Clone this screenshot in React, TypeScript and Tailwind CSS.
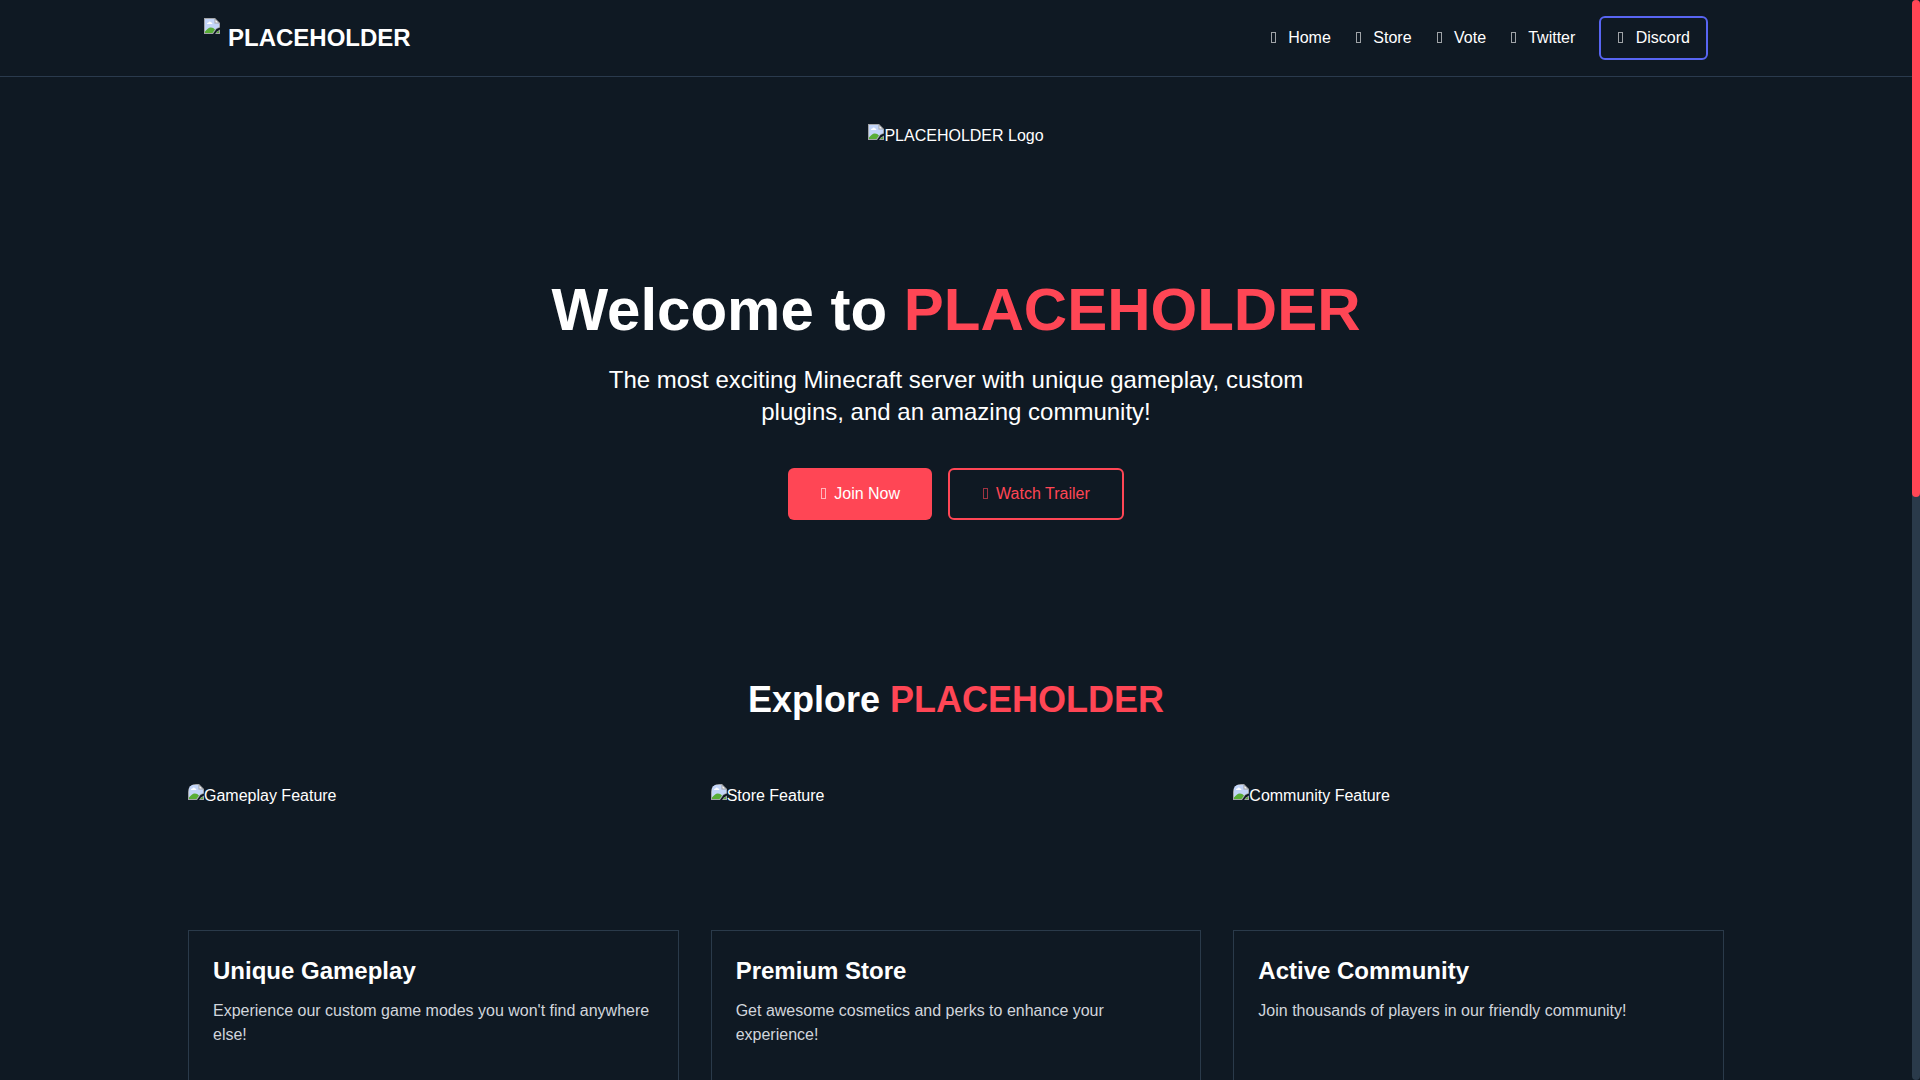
interface Feature {
  alt: string
  title: string
  text: string
}

const LINKS = ['Home', 'Store', 'Vote', 'Twitter']

const FEATURES: Feature[] = [
  {
    alt: 'Gameplay Feature',
    title: 'Unique Gameplay',
    text: "Experience our custom game modes you won't find anywhere else!",
  },
  {
    alt: 'Store Feature',
    title: 'Premium Store',
    text: 'Get awesome cosmetics and perks to enhance your experience!',
  },
  {
    alt: 'Community Feature',
    title: 'Active Community',
    text: 'Join thousands of players in our friendly community!',
  },
]

export default function App() {
  return (
    <div className="flex h-screen overflow-hidden bg-[#0f1923] font-['Liberation_Sans',Arial,sans-serif] text-base text-white">
      <div className="min-w-0 flex-1">
        <Header />
        <main>
          <Hero />
          <Features />
        </main>
      </div>
      <div className="w-2 shrink-0 rounded bg-[#2a3a4a]">
        <div className="h-[46%] rounded bg-[#ff4655]" />
      </div>
    </div>
  )
}

function Header() {
  return (
    <header className="border-b border-[#2a3a4d]">
      <div className="mx-auto flex max-w-screen-2xl items-center justify-between px-4 py-4">
        <a href="#" className="flex items-center gap-2">
          <span className="h-10">
            <MissingImage />
          </span>
          <span className="text-2xl font-bold">PLACEHOLDER</span>
        </a>
        <nav className="flex items-center gap-6">
          {LINKS.map((label) => (
            <a key={label} href="#">
              <MissingGlyph /> {label}
            </a>
          ))}
          <a href="#" className="rounded-md border-2 border-[#5865f2] px-4 py-2">
            <MissingGlyph /> Discord
          </a>
        </nav>
      </div>
    </header>
  )
}

function Hero() {
  return (
    <section className="flex flex-col items-center px-4 pt-[47px] pb-20 text-center">
      <div className="mb-8 flex h-[124px] items-start">
        <MissingImage />
        <span>PLACEHOLDER Logo</span>
      </div>
      <h1 className="mb-6 text-6xl leading-none font-bold">
        Welcome to <span className="text-[#ff4655]">PLACEHOLDER</span>
      </h1>
      <p className="mb-10 max-w-3xl text-2xl">
        The most exciting Minecraft server with unique gameplay, custom plugins, and an amazing community!
      </p>
      <div className="flex gap-4">
        <button className="rounded-md bg-[#ff4655] px-8 py-3">
          <MissingGlyph />
          Join Now
        </button>
        <button className="rounded-md border-2 border-[#ff4655] px-8 py-3 text-[#ff4655]">
          <MissingGlyph />
          Watch Trailer
        </button>
      </div>
    </section>
  )
}

function Features() {
  return (
    <section className="mx-auto max-w-screen-2xl py-20">
      <h2 className="mb-16 text-center text-4xl font-bold">
        Explore <span className="text-[#ff4655]">PLACEHOLDER</span>
      </h2>
      <div className="grid grid-cols-3 gap-8">
        {FEATURES.map((feature) => (
          <article key={feature.title}>
            <div className="flex h-[146px] items-start overflow-hidden rounded-t-lg">
              <MissingImage />
              <span>{feature.alt}</span>
            </div>
            <div className="min-h-48 border border-[#2a3a4a] p-6">
              <h3 className="mb-3 text-2xl font-bold">{feature.title}</h3>
              <p className="text-gray-300">{feature.text}</p>
            </div>
          </article>
        ))}
      </div>
    </section>
  )
}

// Empty box of an icon font that has not loaded
function MissingGlyph() {
  return <span className="mr-2 ml-px inline-block h-[11px] w-[5px] border border-current opacity-60" aria-hidden="true" />
}

// Torn picture shown in place of an image
function MissingImage() {
  return (
    <svg className="h-4 w-4 shrink-0" viewBox="0 0 16 16" aria-hidden="true">
      <path d="M0 0h11l5 5v4.500L12.500 11 9 16H0z" fill="#a3a5a8" />
      <path d="M1 1h9.500L15 5.500V9l-3 1.500L8.500 15H1z" fill="#c3d5f8" />
      <path d="M3 6c0-1 .7-1.500 1.500-1.500C4.800 3.300 6.700 3.300 7 4.500c1 0 1.400.7 1.400 1.500z" fill="#fff" />
      <path d="M1 15v-1.500C3 11.500 4.500 9.500 6.800 9.500c2 0 3 .7 4.200 2L8.500 15z" fill="#58ad36" />
      <path d="M10.500 0v5.500H16z" fill="#a3a5a8" />
      <path d="M11.500 2v2.500H14z" fill="#fff" />
      <path d="M16 11.500V16h-5l2-2.500z" fill="#a3a5a8" />
      <path d="M15 13v2h-2.500l1-1.200z" fill="#58ad36" />
    </svg>
  )
}
